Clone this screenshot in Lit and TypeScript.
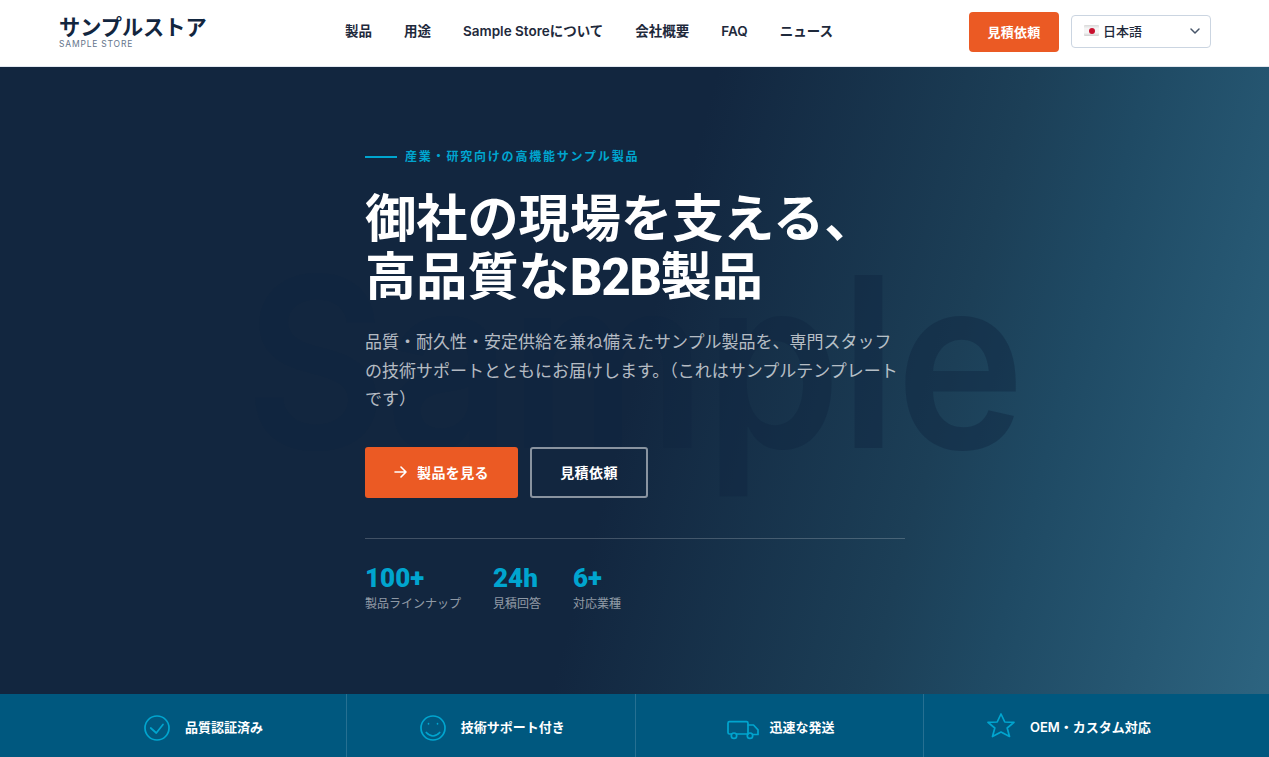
import { LitElement, html, css } from "lit";
import { customElement } from "lit/decorators.js";

@customElement("app-root")
export class AppRoot extends LitElement {
  static styles = css`
    :host { display: block; width: 100%; height: 757px; overflow: hidden; font-family: "Inter", "Noto Sans CJK JP", sans-serif; }
    * { box-sizing: border-box; }
    .head { height: 67px; background: #fff; border-bottom: 1px solid #e2e8f0; display: flex; align-items: center; padding: 0 58px 2px 59px; }
    .logo { display: flex; flex-direction: column; width: 286px; padding-bottom: 1px; }
    .logo b { font: 700 21.2px/22px "Noto Sans CJK JP", sans-serif; color: #12263f; }
    .logo small { font: 400 8.5px/10px "Inter", sans-serif; color: #64748b; letter-spacing: 0.8px; margin-top: 2px; }
    nav { display: flex; gap: 32px; flex: 1; margin-bottom: 2px; }
    nav a { font: 600 13.5px/20px "Inter", "Noto Sans CJK JP", sans-serif; color: #1e293b; }
    .quote { width: 90px; height: 40px; background: #eb5a24; border-radius: 4px; color: #fff; font: 600 13px/40px "Noto Sans CJK JP", sans-serif; text-align: center; margin-right: 12px; letter-spacing: 0.3px; }
    .lang { width: 140px; height: 33px; margin-bottom: 1px; border: 1px solid #cbd5e1; border-radius: 4px; display: flex; align-items: center; padding: 0 9px 2px 12px; font: 500 13px/1 "Noto Sans CJK JP", sans-serif; color: #1e293b; gap: 4px; }
    .lang span.t { flex: 1; }
    .flag { width: 15px; height: 11px; background: linear-gradient(180deg, #d9d9d9, #f5f5f5 30%, #f5f5f5 70%, #cfcfcf); display: flex; align-items: center; justify-content: center; border-radius: 1px; }
    .flag i { width: 6px; height: 6px; border-radius: 50%; background: #c8102e; display: block; }
    .hero { position: relative; height: 627px; background: linear-gradient(105deg, #12263f 0%, #12263f 50%, #1c3f57 72%, #1f4a64 80%, #2d6480 100%); padding: 80px 0 0 365px; overflow: hidden; }
    .wm { position: absolute; left: 245px; top: 175px; font: 600 238px/1 "Inter", sans-serif; color: rgba(16,38,64,0.45); white-space: nowrap; letter-spacing: -1px; transform: scaleX(0.915); transform-origin: left top; }
    .content { position: relative; width: 540px; }
    .eyebrow { display: flex; align-items: center; gap: 8px; font: 700 12px/18px "Noto Sans CJK JP", sans-serif; color: #00a5cf; letter-spacing: 1.8px; }
    .eyebrow i { width: 32px; height: 2px; background: #00a5cf; display: block; margin-top: 2px; }
    h1 { margin: 21px 0 0; font: 700 51.2px/58px "Noto Sans CJK JP", sans-serif; color: #fff; }
    h1 .l { font-family: "Roboto", sans-serif; font-weight: 800; letter-spacing: -1.5px; }
    p { margin: 20px 0 0; font: 400 17px/28.5px "Noto Sans CJK JP", sans-serif; color: rgba(255,255,255,0.7); }
    .btns { display: flex; gap: 12px; margin-top: 34px; }
    .b1, .b2 { height: 51px; border-radius: 3px; color: #fff; font: 600 14px/1 "Noto Sans CJK JP", sans-serif; display: flex; align-items: center; justify-content: center; letter-spacing: 0.4px; }
    .b1 { width: 153px; background: #eb5a24; gap: 10px; }
    .b2 { width: 118px; border: 2px solid rgba(255,255,255,0.5); }
    .stats { display: flex; gap: 32px; border-top: 1px solid rgba(255,255,255,0.2); margin-top: 40px; padding-top: 24px; }
    .stat b { display: block; font: 900 26px/31px "Roboto", sans-serif; color: #00a5cf; }
    .stat span { display: block; font: 400 12px/18px "Noto Sans CJK JP", sans-serif; color: rgba(255,255,255,0.55); }
    .bar { height: 63px; background: #00587f; padding: 0 58px; display: grid; grid-template-columns: repeat(4, 1fr); }
    .cell { display: flex; align-items: center; justify-content: center; gap: 15px; color: #fff; font: 600 13px/1 "Inter", "Noto Sans CJK JP", sans-serif; border-left: 1px solid rgba(255,255,255,0.15); padding: 3px 0 0 3px; }
    .cell:first-child { border-left: 0; }
    .cell svg { fill: none; stroke: #00a5cf; stroke-width: 1.7; stroke-linecap: round; stroke-linejoin: round; flex: none; }
    .cell svg.truck { margin-right: -4px; }
  `;
  render() {
    return html`
      <header class="head">
        <div class="logo"><b>サンプルストア</b><small>SAMPLE STORE</small></div>
        <nav><a>製品</a><a>用途</a><a>Sample Storeについて</a><a>会社概要</a><a>FAQ</a><a>ニュース</a></nav>
        <div class="quote">見積依頼</div>
        <div class="lang"><span class="flag"><i></i></span><span class="t">日本語</span>
          <svg width="12" height="12" viewBox="0 0 12 12" fill="none" stroke="#475569" stroke-width="1.5" stroke-linecap="round" stroke-linejoin="round"><path d="M2 4l4 4 4-4"/></svg>
        </div>
      </header>
      <section class="hero">
        <div class="wm">Sample</div>
        <div class="content">
          <div class="eyebrow"><i></i>産業・研究向けの高機能サンプル製品</div>
          <h1>御社の現場を支える、<br/>高品質な<span class="l">B2B</span>製品</h1>
          <p>品質・耐久性・安定供給を兼ね備えたサンプル製品を、専門スタッフの技術サポートとともにお届けします。（これはサンプルテンプレートです）</p>
          <div class="btns">
            <div class="b1"><svg width="13" height="14" viewBox="0 0 13 14" fill="none" stroke="#fff" stroke-width="1.6" stroke-linecap="round" stroke-linejoin="round"><path d="M1 7h11M7 2l5 5-5 5"/></svg>製品を見る</div>
            <div class="b2">見積依頼</div>
          </div>
          <div class="stats">
            <div class="stat"><b>100+</b><span>製品ラインナップ</span></div>
            <div class="stat"><b>24h</b><span>見積回答</span></div>
            <div class="stat"><b>6+</b><span>対応業種</span></div>
          </div>
        </div>
      </section>
      <section class="bar">
        <div class="cell"><svg width="26" height="28" viewBox="0 0 26 28"><circle cx="13" cy="15" r="12"/><path d="M6.700 15l5.600 5 6.700-8.500"/></svg>品質認証済み</div>
        <div class="cell"><svg width="26" height="28" viewBox="0 0 26 28"><circle cx="13" cy="15" r="12"/><path d="M6.300 19.500Q13 26.500 19.700 19.500"/><path d="M8.500 10.700v.1M17.500 10.700v.1"/></svg>技術サポート付き</div>
        <div class="cell"><svg class="truck" width="32" height="28" viewBox="0 0 32 28"><path d="M4.300 21H2.500A1.500 1.500 0 0 1 1 19.500V10.200A1.500 1.500 0 0 1 2.500 8.700H19.500A1.500 1.500 0 0 1 21 10.200V21H9.700"/><path d="M21 12H26.500L31 16.800V21.500H25.700"/><circle cx="7" cy="22.700" r="2.700"/><circle cx="23" cy="22.700" r="2.700"/></svg>迅速な発送</div>
        <div class="cell"><svg width="28" height="28" viewBox="0 0 28 28"><path d="M14 1L17.800 9L27 9.300L20.200 15L22.500 23.500L14 19L5.500 23.500L7.800 15L1 9.300L10.200 9Z"/></svg>OEM・カスタム対応</div>
      </section>
    `;
  }
}
